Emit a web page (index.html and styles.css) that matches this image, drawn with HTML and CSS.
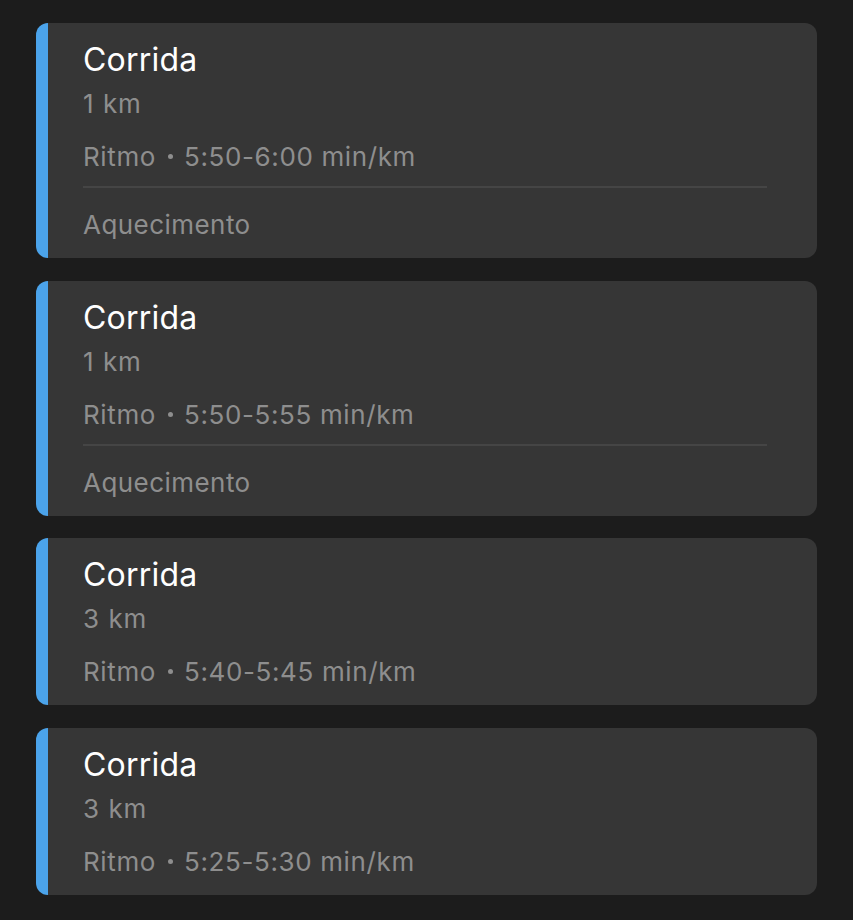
FILE: index.html
```html
<!DOCTYPE html>
<html lang="pt">
<head>
<meta charset="utf-8">
<link rel="stylesheet" href="styles.css">
</head>
<body>
<div class="list">
  <div class="card">
    <div class="title">Corrida</div>
    <div class="sub">1 km</div>
    <div class="pace">Ritmo<span class="dot"></span>5:50-6:00 min/km</div>
    <div class="divider"></div>
    <div class="note">Aquecimento</div>
  </div>
  <div class="card">
    <div class="title">Corrida</div>
    <div class="sub">1 km</div>
    <div class="pace">Ritmo<span class="dot"></span>5:50-5:55 min/km</div>
    <div class="divider"></div>
    <div class="note">Aquecimento</div>
  </div>
  <div class="card card-tight">
    <div class="title">Corrida</div>
    <div class="sub">3 km</div>
    <div class="pace">Ritmo<span class="dot"></span>5:40-5:45 min/km</div>
  </div>
  <div class="card">
    <div class="title">Corrida</div>
    <div class="sub">3 km</div>
    <div class="pace">Ritmo<span class="dot"></span>5:25-5:30 min/km</div>
  </div>
</div>
</body>
</html>
```
FILE: styles.css
```css
html, body {
  margin: 0;
  background: #1c1c1c;
}
body {
  font-family: Inter, "Noto Sans", sans-serif;
  height: 920px;
}
.list {
  display: flex;
  flex-direction: column;
  gap: 23px;
  padding: 23px 36px 0 36px;
}
.card {
  background: #363636;
  border-left: 12px solid #4ba3ea;
  border-radius: 12px;
  padding: 17px 50px 16px 35px;
  display: flex;
  flex-direction: column;
}
.card-tight {
  margin-top: -1px;
}
.title {
  color: #ffffff;
  font-size: 32px;
  line-height: 40px;
  letter-spacing: 0.2px;
}
.sub {
  color: #8e8e8e;
  font-size: 26px;
  line-height: 34px;
  margin-top: 7px;
  letter-spacing: 0.6px;
  word-spacing: 1px;
}
.pace {
  color: #8e8e8e;
  font-size: 26px;
  line-height: 34px;
  margin-top: 19px;
  letter-spacing: 0.62px;
}
.dot {
  display: inline-block;
  width: 5px;
  height: 5px;
  border-radius: 50%;
  background: #8e8e8e;
  margin: 0 11px 0 12px;
  vertical-align: 7px;
}
.divider {
  height: 2px;
  background: #454545;
  margin-top: 12px;
}
.note {
  color: #8e8e8e;
  font-size: 26px;
  line-height: 34px;
  margin-top: 20px;
  letter-spacing: 0.45px;
}
```
